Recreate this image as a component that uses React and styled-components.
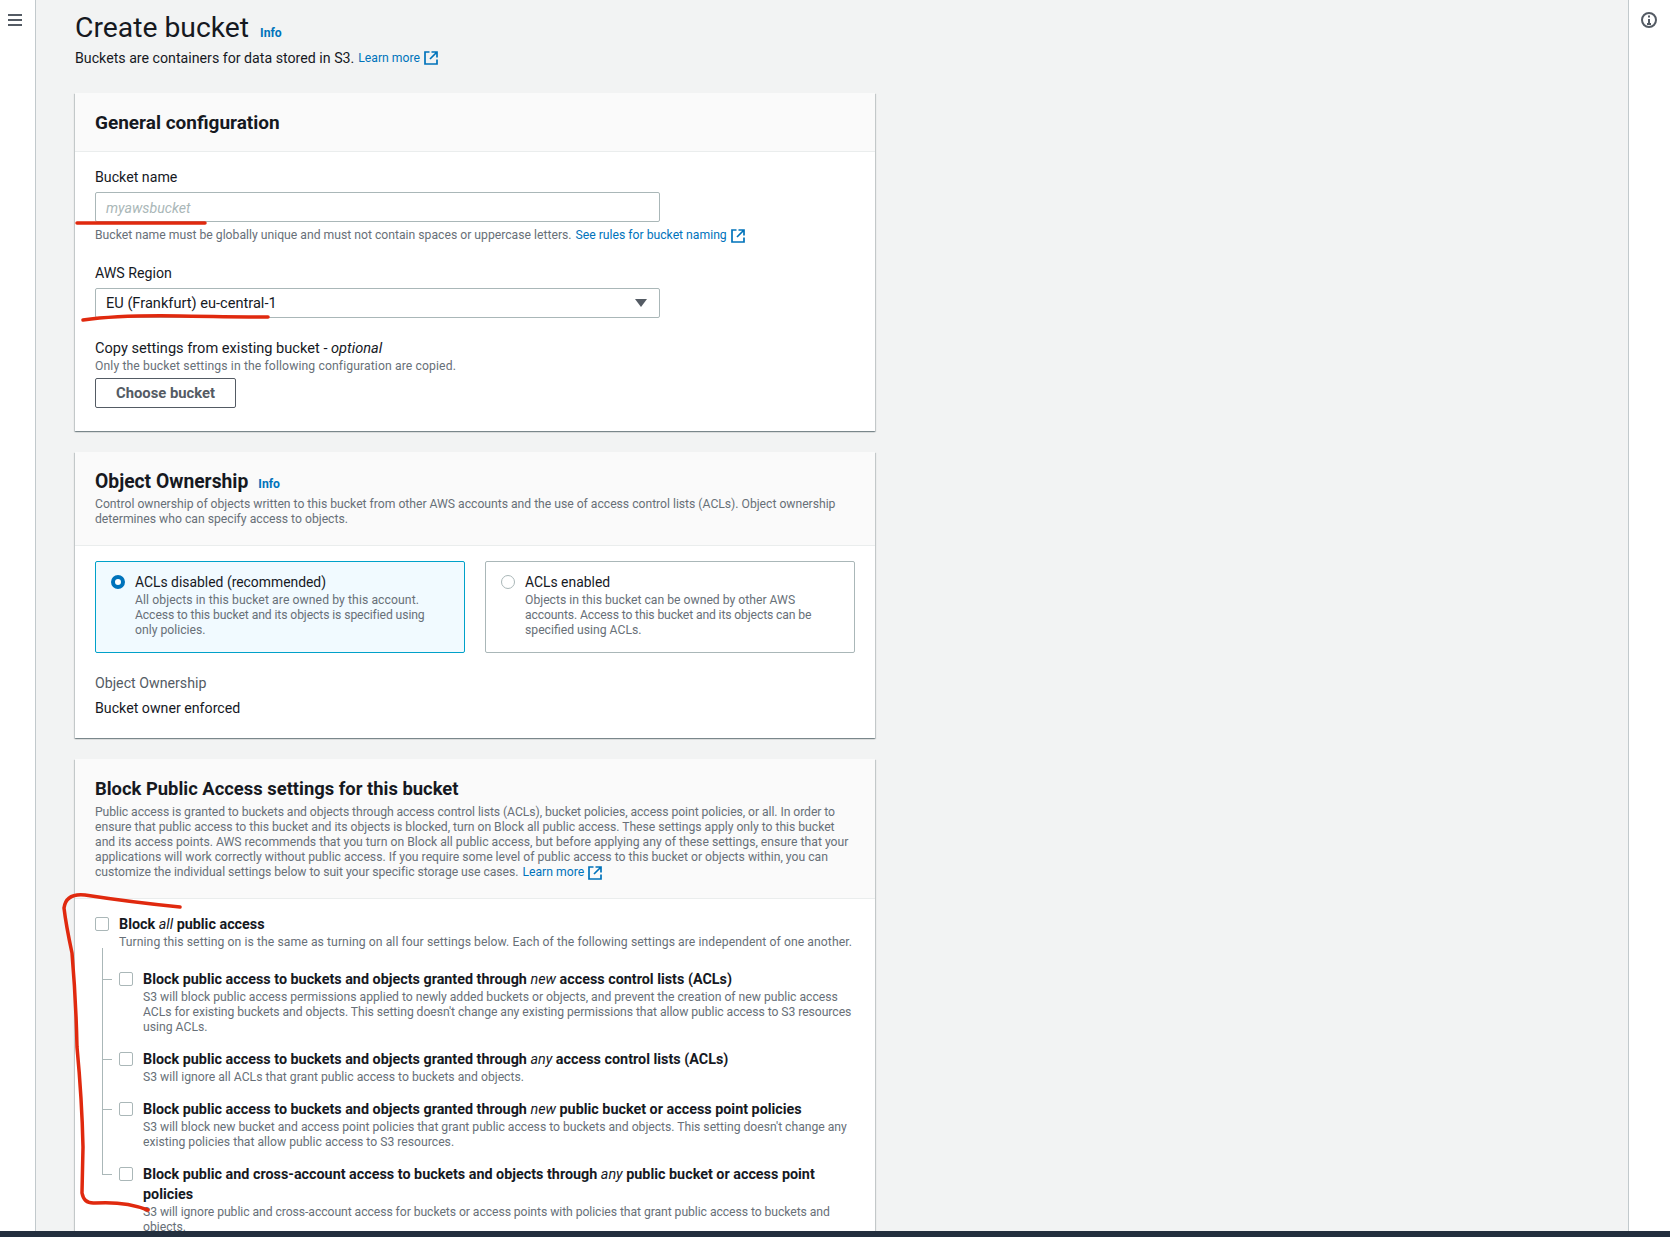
import React from "react";
import styled, { createGlobalStyle } from "styled-components";

const FONT = `Roboto, "Noto Sans", "Liberation Sans", sans-serif`;

const Global = createGlobalStyle`
  html, body { margin: 0; padding: 0; height: 100%; overflow: hidden; }
  body { font-family: ${FONT}; font-size: 14.2px; line-height: 20px; color: #16191f; background: #f2f3f3; }
  * { box-sizing: border-box; }
`;

const Page = styled.div`
  position: relative;
  display: flex;
  width: 1670px;
  height: 1237px;
  overflow: hidden;
`;
const Rail = styled.aside`
  flex: 0 0 ${p => p.$w}px;
  display: flex;
  justify-content: ${p => (p.$side === "left" ? "flex-start" : "center")};
  background: #fff;
  padding: 12px 0 0 ${p => (p.$side === "left" ? 8 : 0)}px;
  ${p => (p.$side === "left" ? "border-right: 1px solid #c2c9cc;" : "border-left: 1px solid #c2c9cc;")}
`;
const Main = styled.main`
  flex: 1;
  padding: 10px 0 0 39px;
  width: 800px;
`;
const TitleRow = styled.div`
  display: flex;
  align-items: baseline;
  gap: 11px;
`;
const H1 = styled.h1`
  margin: 0;
  font-size: 28.3px;
  line-height: 36px;
  font-weight: 400;
`;
const Link = styled.a`
  color: #0073bb;
  font-size: ${p => p.$size || 12.2}px;
  font-weight: ${p => (p.$bold ? 700 : 400)};
  white-space: nowrap;
`;
const Sub = styled.div`
  margin-top: 2px;
  display: flex;
  align-items: center;
  gap: 4px;
`;
const Panel = styled.section`
  width: 800px;
  margin-top: ${p => p.$mt || 21}px;
  background: #fff;
  box-shadow: 0 1px 1px 0 rgba(0, 28, 36, 0.3), 1px 1px 1px 0 rgba(0, 28, 36, 0.15), -1px 1px 1px 0 rgba(0, 28, 36, 0.15);
`;
const PanelHead = styled.header`
  background: #fafafa;
  border-bottom: 1px solid #eaeded;
  padding: ${p => p.$pad || "18px 20px 16px"};
`;
const H2 = styled.h2`
  margin: 0;
  font-size: ${p => p.$size || 19}px;
  line-height: 24px;
  font-weight: 700;
  display: flex;
  align-items: baseline;
  gap: 10px;
`;
const PanelBody = styled.div`
  padding: ${p => p.$pad || "15px 20px 23px"};
`;
const Small = styled.div`
  font-size: 12.2px;
  line-height: 15px;
  color: #687078;
  white-space: nowrap;
  margin-top: ${p => p.$mt || 0}px;
`;
const Fit = styled.span`
  letter-spacing: ${p => p.$ls}px;
`;
const Label = styled.div`
  font-size: ${p => p.$size || 14.2}px;
  line-height: 20px;
  margin-top: ${p => p.$mt || 0}px;
  color: ${p => p.$color || "#16191f"};
`;
const Field = styled.div`
  width: 565px;
  height: 30px;
  margin-top: 5px;
  border: 1px solid #aab7b8;
  border-radius: 2px;
  background: #fff;
  padding: ${p => (p.$placeholder ? "1px 10px 0" : "0 10px")};
  display: flex;
  align-items: center;
  justify-content: space-between;
  font-size: ${p => (p.$placeholder ? 14.2 : 14.6)}px;
  color: ${p => (p.$placeholder ? "#aab7b8" : "#16191f")};
  font-style: ${p => (p.$placeholder ? "italic" : "normal")};
`;
const Help = styled(Small)`
  display: flex;
  align-items: center;
  gap: 4px;
  margin-top: ${p => p.$mt ?? 6}px;
`;
const Button = styled.button`
  display: block;
  margin-top: 4px;
  width: 141px;
  height: 30px;
  background: #fff;
  border: 1px solid #545b64;
  border-radius: 2px;
  color: #545b64;
  font: 700 14.8px ${FONT};
`;
const Tiles = styled.div`
  display: grid;
  grid-template-columns: 370px 370px;
  gap: 20px;
`;
const Tile = styled.div`
  height: 92px;
  padding: 10px 14px 10px 15px;
  display: flex;
  gap: 10px;
  border: 1px solid ${p => (p.$on ? "#00a1c9" : "#aab7b8")};
  border-radius: 2px;
  background: ${p => (p.$on ? "#f1faff" : "#fff")};
`;
const Radio = styled.span`
  flex: 0 0 14px;
  width: 14px;
  height: 14px;
  margin-top: 3px;
  border-radius: 50%;
  background: #fff;
  border: ${p => (p.$on ? "4px solid #0073bb" : "1px solid #aab7b8")};
`;
const CheckRow = styled.div`
  display: flex;
  gap: 10px;
`;
const Check = styled.span`
  flex: 0 0 14px;
  width: 14px;
  height: 14px;
  margin-top: 3px;
  background: #fff;
  border: 1px solid #aab7b8;
  border-radius: 2px;
`;
const Strong = styled.div`
  font-weight: 700;
  font-size: 14.35px;
  line-height: 20px;
  white-space: nowrap;
  margin-top: 1px;
`;
const Em = styled.em`
  font-weight: 400;
`;
const Tree = styled.div`
  margin: 19px 0 0 7px;
`;
const TreeItem = styled.div`
  position: relative;
  padding: 0 0 14px 17px;
  &::before {
    content: "";
    position: absolute;
    left: 0;
    top: ${p => p.$lineTop || 0}px;
    bottom: 0;
    border-left: 1px solid #aab7b8;
  }
  &::after {
    content: "";
    position: absolute;
    left: 0;
    top: 10px;
    width: 10px;
    border-top: 1px solid #aab7b8;
  }
  &:last-child::before {
    bottom: auto;
    height: 11px;
  }
`;
const BottomBar = styled.div`
  position: absolute;
  left: 0;
  right: 0;
  bottom: 0;
  height: 6px;
  background: #232f3e;
`;
const Ink = styled.svg`
  position: absolute;
  left: 0;
  top: 0;
  pointer-events: none;
`;
const Icon = styled.svg`
  flex: none;
  display: block;
`;

const External = ({ size = 14 }) => (
  <Icon width={size} height={size} viewBox="0 0 14 14" fill="none" stroke="#0073bb" strokeWidth="1.7">
    <path d="M5.5 1H1v12h12V8.5" />
    <path d="M7.5 1H13v5.5M13 1 6 8" />
  </Icon>
);

export default function App() {
  return (
    <Page>
      <Global />
      <Rail $w={36} $side="left">
        <Icon width="14" height="12" viewBox="0 0 14 12" fill="none" stroke="#545b64" strokeWidth="2" style={{ marginTop: 2 }}>
          <path d="M0 1h14M0 6h14M0 11h14" />
        </Icon>
      </Rail>
      <Main>
        <TitleRow>
          <H1>Create bucket</H1>
          <Link $bold>Info</Link>
        </TitleRow>
        <Sub>
          <span>Buckets are containers for data stored in S3.</span>
          <Link>Learn more</Link>
          <External />
        </Sub>
        <Panel $mt={25}>
          <PanelHead>
            <H2>General configuration</H2>
          </PanelHead>
          <PanelBody>
            <Label>Bucket name</Label>
            <Field $placeholder>myawsbucket</Field>
            <Help>
              <span>Bucket name must be globally unique and must not contain spaces or uppercase letters.</span>
              <Link>See rules for bucket naming</Link>
              <External />
            </Help>
            <Label $mt={20}>AWS Region</Label>
            <Field>
              EU (Frankfurt) eu-central-1
              <Icon width="12" height="8" viewBox="0 0 12 8" style={{ marginRight: 2 }}>
                <path d="M0 0h12L6 8z" fill="#545b64" />
              </Icon>
            </Field>
            <Label $mt={20} $size={14.6}>
              Copy settings from existing bucket - <em>optional</em>
            </Label>
            <Small $mt={1}><Fit $ls={0.11}>Only the bucket settings in the following configuration are copied.</Fit></Small>
            <Button>Choose bucket</Button>
          </PanelBody>
        </Panel>
        <Panel>
          <PanelHead $pad="18px 20px 18px">
            <H2 $size={19.3}>
              Object Ownership <Link $bold>Info</Link>
            </H2>
            <Small $mt={1}>
              <Fit $ls={-0.02}>Control ownership of objects written to this bucket from other AWS accounts and the use of access control lists (ACLs). Object ownership</Fit>
              <br />
              determines who can specify access to objects.
            </Small>
          </PanelHead>
          <PanelBody $pad="15px 20px 20px">
            <Tiles>
              <Tile $on>
                <Radio $on />
                <div>
                  <Label $size={13.9}>ACLs disabled (recommended)</Label>
                  <Small $mt={1}>
                    <Fit $ls={0.08}>All objects in this bucket are owned by this account.</Fit>
                    <br />
                    <Fit $ls={-0.11}>Access to this bucket and its objects is specified using</Fit>
                    <br />
                    only policies.
                  </Small>
                </div>
              </Tile>
              <Tile>
                <Radio />
                <div>
                  <Label $size={13.9}>ACLs enabled</Label>
                  <Small $mt={1}>
                    Objects in this bucket can be owned by other AWS
                    <br />
                    <Fit $ls={-0.14}>accounts. Access to this bucket and its objects can be</Fit>
                    <br />
                    specified using ACLs.
                  </Small>
                </div>
              </Tile>
            </Tiles>
            <Label $mt={20} $color="#545b64">Object Ownership</Label>
            <Label $mt={5}>Bucket owner enforced</Label>
          </PanelBody>
        </Panel>
        <Panel>
          <PanelHead $pad="18px 20px 18px">
            <H2 $size={18.4}>Block Public Access settings for this bucket</H2>
            <Small $mt={4}>
              <Fit $ls={-0.07}>Public access is granted to buckets and objects through access control lists (ACLs), bucket policies, access point policies, or all. In order to</Fit>
              <br />
              <Fit $ls={-0.03}>ensure that public access to this bucket and its objects is blocked, turn on Block all public access. These settings apply only to this bucket</Fit>
              <br />
              and its access points. AWS recommends that you turn on Block all public access, but before applying any of these settings, ensure that your
              <br />
              applications will work correctly without public access. If you require some level of public access to this bucket or objects within, you can
            </Small>
            <Help $mt={0}>
              <Fit $ls={-0.04}>customize the individual settings below to suit your specific storage use cases.</Fit>
              <Link>Learn more</Link>
              <External />
            </Help>
          </PanelHead>
          <PanelBody $pad="15px 20px 0">
            <CheckRow>
              <Check />
              <div>
                <Strong>
                  Block <Em>all</Em> public access
                </Strong>
                <Small><Fit $ls={0.07}>Turning this setting on is the same as turning on all four settings below. Each of the following settings are independent of one another.</Fit></Small>
              </div>
            </CheckRow>
            <Tree>
              <TreeItem $lineTop={-21}>
                <CheckRow>
                  <Check />
                  <div>
                    <Strong>
                      Block public access to buckets and objects granted through <Em>new</Em> access control lists (ACLs)
                    </Strong>
                    <Small>
                      <Fit $ls={-0.02}>S3 will block public access permissions applied to newly added buckets or objects, and prevent the creation of new public access</Fit>
                      <br />
                      <Fit $ls={-0.06}>ACLs for existing buckets and objects. This setting doesn't change any existing permissions that allow public access to S3 resources</Fit>
                      <br />
                      using ACLs.
                    </Small>
                  </div>
                </CheckRow>
              </TreeItem>
              <TreeItem>
                <CheckRow>
                  <Check />
                  <div>
                    <Strong>
                      Block public access to buckets and objects granted through <Em>any</Em> access control lists (ACLs)
                    </Strong>
                    <Small>S3 will ignore all ACLs that grant public access to buckets and objects.</Small>
                  </div>
                </CheckRow>
              </TreeItem>
              <TreeItem>
                <CheckRow>
                  <Check />
                  <div>
                    <Strong>
                      Block public access to buckets and objects granted through <Em>new</Em> public bucket or access point policies
                    </Strong>
                    <Small>
                      <Fit $ls={-0.025}>S3 will block new bucket and access point policies that grant public access to buckets and objects. This setting doesn't change any</Fit>
                      <br />
                      existing policies that allow public access to S3 resources.
                    </Small>
                  </div>
                </CheckRow>
              </TreeItem>
              <TreeItem>
                <CheckRow>
                  <Check />
                  <div>
                    <Strong>
                      Block public and cross-account access to buckets and objects through <Em>any</Em> public bucket or access point
                      <br />
                      policies
                    </Strong>
                    <Small>
                      <Fit $ls={-0.066}>S3 will ignore public and cross-account access for buckets or access points with policies that grant public access to buckets and</Fit>
                      <br />
                      objects.
                    </Small>
                  </div>
                </CheckRow>
              </TreeItem>
            </Tree>
          </PanelBody>
        </Panel>
      </Main>
      <Rail $w={42} $side="right">
        <Icon width="16" height="16" viewBox="0 0 16 16" fill="none" stroke="#545b64" strokeWidth="2" style={{ marginRight: 2 }}>
          <circle cx="8" cy="8" r="7" />
          <path d="M8 7v5M6 12h4M8 3.5v2" />
        </Icon>
      </Rail>
      <Ink width="1670" height="1237" fill="none" stroke="#e0290e" strokeWidth="3.5" strokeLinecap="round">
        <path d="M77 223H205" />
        <path d="M83 320Q120 315 180 316T268 317" />
        <path d="M180 907Q130 902 85 895Q66 893 64 908Q66 925 72 953Q76 1000 77 1047Q82 1100 83 1147L82 1193Q84 1204 95 1203Q125 1201 148 1210" />
      </Ink>
      <BottomBar />
    </Page>
  );
}
